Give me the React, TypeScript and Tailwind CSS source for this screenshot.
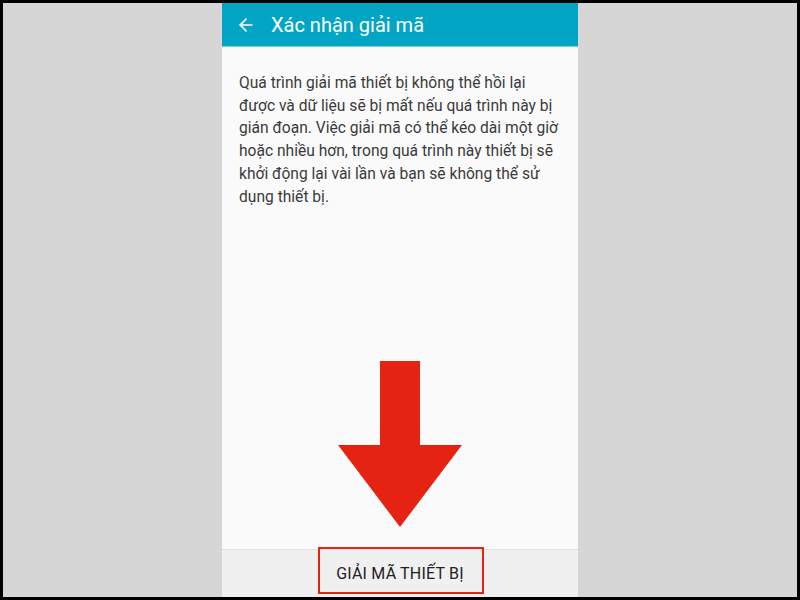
import { ArrowLeft } from "lucide-react"

const BODY =
  "Quá trình giải mã thiết bị không thể hồi lại được và dữ liệu sẽ bị mất nếu quá trình này bị gián đoạn. Việc giải mã có thể kéo dài một giờ hoặc nhiều hơn, trong quá trình này thiết bị sẽ khởi động lại vài lần và bạn sẽ không thể sử dụng thiết bị."

export default function App() {
  return (
    <div
      className="w-[800px] h-[600px] bg-black p-[3px]"
      style={{ fontFamily: "Roboto, 'Noto Sans', sans-serif" }}
    >
      <div className="w-full h-full bg-[#d6d6d6] flex justify-center">
        <div className="relative w-[356px] h-full flex flex-col bg-[#fafafa]">
          {/* Toolbar */}
          <div className="h-[44px] bg-[#02a6c4] border-b border-[#7fcfdd] flex items-center px-[14px] gap-[15px] text-white">
            <ArrowLeft size={20} strokeWidth={2} />
            <span className="text-[20px] leading-none">Xác nhận giải mã</span>
          </div>

          <div className="flex-1 pl-[17px] pr-[17px] pt-[25px]">
            <p className="text-[15.6px] leading-[22.7px] text-[#3a3a3a]">{BODY}</p>
          </div>

          {/* Bottom action bar */}
          <div className="h-[48px] bg-[#f0f0f0] border-t border-[#e2e2e2] flex items-center justify-center">
            <span className="text-[16px] text-[#222222] tracking-[0.2px]">GIẢI MÃ THIẾT BỊ</span>
          </div>

          {/* Annotation overlays */}
          <svg
            className="absolute left-[116px] top-[358px]"
            width="124"
            height="166"
            viewBox="0 0 124 166"
          >
            <path d="M42 0 H82 V84 H124 L62 166 L0 84 H42 Z" fill="#e42313" />
          </svg>
          <div className="absolute left-[96px] top-[544px] w-[166px] h-[47px] border-2 border-[#e42313]" />
        </div>
      </div>
    </div>
  )
}
